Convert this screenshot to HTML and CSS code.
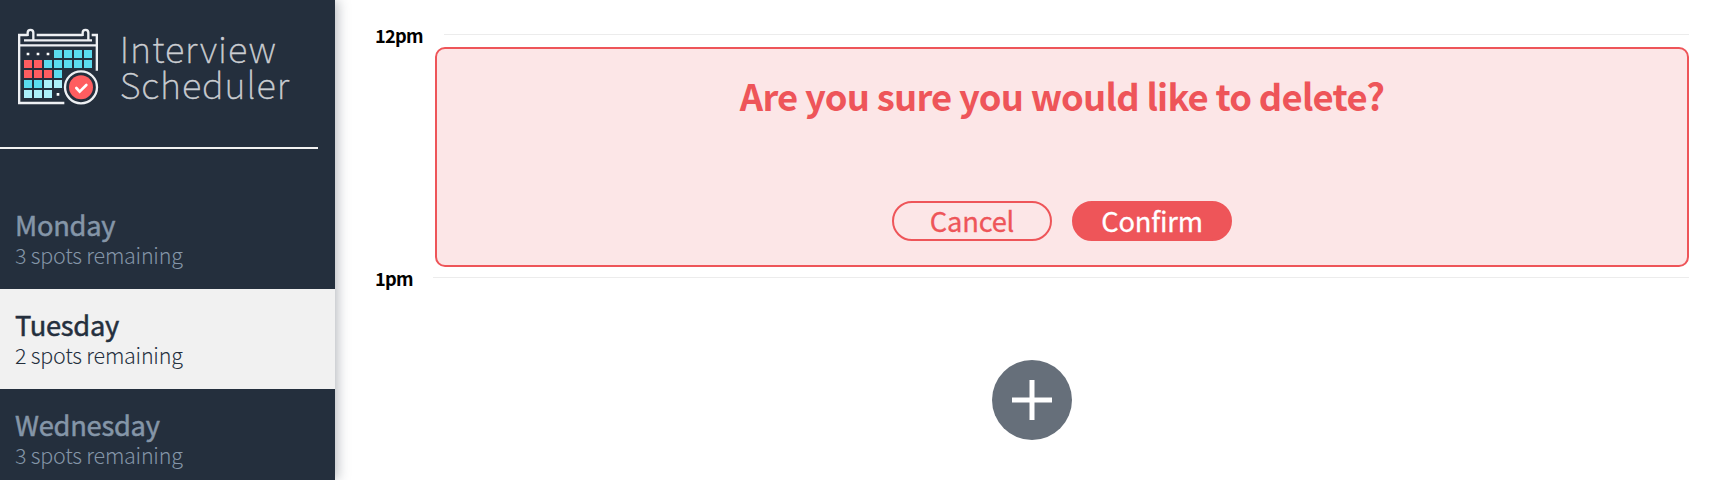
FILE: index.html
```html
<!DOCTYPE html>
<html lang="en">
<head>
<meta charset="utf-8">
<title>Interview Scheduler</title>
<link rel="stylesheet" href="styles.css">
</head>
<body>
<main class="layout">
  <aside class="sidebar">
    <svg class="logo" viewBox="0 0 900 285" role="img" aria-label="Interview Scheduler">
      <g fill="none" stroke="#eef0f3" stroke-width="7">
        <path d="M53 45H27.500V249H163M80 45H218M245 45H260.500V152M30 76H261M42 61H246"/>
        <path d="M53 48V38a8.500 8.500 0 0 1 17 0V61M218 48V38a8.500 8.500 0 0 1 17 0V61"/>
      </g>
      <path fill="#fff" d="M50 98h8v8h-8zM80 98h8v8h-8zM110 98h8v8h-8zM140 219h8v8h-8z"/>
      <path fill="#5bdbee" d="M132 90h24v24h-24zM162 90h24v24h-24zM192 90h24v24h-24zM222 90h24v24h-24zM102 120h24v24h-24zM132 120h24v24h-24zM162 120h24v24h-24zM192 120h24v24h-24zM222 120h24v24h-24zM132 150h24v24h-24zM42 180h24v24h-24zM72 180h24v24h-24z"/>
      <path fill="#ff5d60" d="M42 120h24v24h-24zM72 120h24v24h-24zM42 150h24v24h-24zM72 150h24v24h-24zM102 150h24v24h-24z"/>
      <path fill="#abf0fa" d="M102 180h24v24h-24zM132 180h24v24h-24zM42 210h24v24h-24zM72 210h24v24h-24zM102 210h24v24h-24z"/>
      <circle cx="213" cy="202" r="54" fill="#242f3d"/>
      <circle cx="213" cy="202" r="48" fill="none" stroke="#eef0f3" stroke-width="7"/>
      <circle cx="213" cy="202" r="36" fill="#ff5d60"/>
      <path d="M199 204l10 11 20-20" fill="none" stroke="#fff" stroke-width="8" stroke-linecap="round"/>
      <text class="logo-text" x="329" y="129" textLength="468">Interview</text>
      <text class="logo-text" x="329" y="238" textLength="508">Scheduler</text>
    </svg>
    <hr class="divider">
    <ul class="days">
      <li class="day"><h2 class="day-name">Monday</h2><p class="spots">3 spots remaining</p></li>
      <li class="day selected"><h2 class="day-name">Tuesday</h2><p class="spots">2 spots remaining</p></li>
      <li class="day"><h2 class="day-name">Wednesday</h2><p class="spots">3 spots remaining</p></li>
    </ul>
  </aside>
  <section class="schedule">
    <header class="time time-noon"><h4 class="hour">12pm</h4><hr class="rule"></header>
    <article class="card">
      <h1 class="question">Are you sure you would like to delete?</h1>
      <div class="actions">
        <button class="button">Cancel</button>
        <button class="button button-solid">Confirm</button>
      </div>
    </article>
    <header class="time time-one"><h4 class="hour">1pm</h4><hr class="rule"></header>
    <div class="empty">
      <svg class="add" viewBox="0 0 80 80" role="img" aria-label="Add"><circle cx="40" cy="40" r="40" fill="#666f7a"/><path d="M20 40H60M40 20V60" stroke="#fff" stroke-width="5"/></svg>
    </div>
  </section>
</main>
</body>
</html>
```
FILE: styles.css
```css
* { box-sizing: border-box; margin: 0; padding: 0; }
body { background: #fff; font-family: "Noto Sans CJK SC", "Noto Sans", sans-serif; overflow: hidden; }
.layout { display: flex; height: 480px; overflow: hidden; }
.sidebar { width: 335px; flex: none; background: #242f3d; padding-top: 20px; box-shadow: 2px 0 12px rgba(36, 47, 61, .35); }
.logo { display: block; width: 300px; height: 95px; margin-left: 10px; }
.logo-text { font-size: 109px; font-weight: 100; fill: #cbced2; stroke: #cbced2; stroke-width: 1.500px; }
.divider { width: 318px; height: 2px; border: 0; background: #f2f2f2; margin-top: 32px; }
.days { list-style: none; padding-top: 40px; }
.day { height: 100px; padding: 20px 15px; color: #8596a8; }
.day.selected { background: #f1f1f1; color: #242f3d; }
.day-name { font-size: 27.3px; line-height: 31px; font-weight: 400; letter-spacing: -.27px; -webkit-text-stroke: .5px currentColor; }
.spots { font-size: 21.500px; line-height: 30px; font-weight: 300; letter-spacing: -.24px; }
.schedule { flex: 1; padding-right: 24px; }
.time { display: flex; padding-left: 40px; }
.time-noon { height: 47px; padding-top: 20px; }
.time-one { height: 53px; }
.hour { font-size: 18.200px; line-height: 31px; font-weight: 700; width: 58px; letter-spacing: -.7px; color: #000; }
.rule { flex: 1; height: 1px; border: 0; background: #ececec; }
.time-noon .rule { margin: 14px 0 0 11px; }
.time-one .rule { margin-top: 10px; }
.time-one .hour { margin-top: -4px; }
.card { height: 220px; margin-left: 100px; border: 2px solid #ee5559; border-radius: 10px; background: #fce6e7; text-align: center; color: #ee5559; padding-top: 25px; }
.question { font-size: 36.400px; line-height: 42px; font-weight: 700; letter-spacing: -.76px; }
.actions { display: flex; justify-content: center; gap: 20px; margin-top: 85px; }
.button { width: 160px; height: 40px; padding-bottom: 2px; border: 2px solid #ee5559; border-radius: 20px; background: transparent; color: #ee5559; font: 400 27.300px/34px "Noto Sans CJK SC", "Noto Sans", sans-serif; letter-spacing: -.2px; -webkit-text-stroke: .3px currentColor; }
.button-solid { background: #ee5559; color: #fff; }
.empty { padding: 40px 0 0 40px; display: flex; justify-content: center; }
.add { width: 80px; height: 80px; }
```
